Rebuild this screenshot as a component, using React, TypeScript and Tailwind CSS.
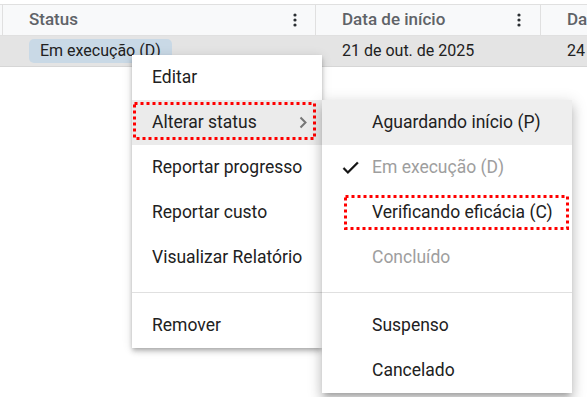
import { ReactNode } from 'react';

function Dots() {
  return (
    <svg width="4" height="14" viewBox="0 0 4 14" className="text-[#2b2f33]">
      <circle cx="2" cy="2" r="1.6" fill="currentColor" />
      <circle cx="2" cy="7" r="1.6" fill="currentColor" />
      <circle cx="2" cy="12" r="1.6" fill="currentColor" />
    </svg>
  );
}

function DottedBox({ w, h }: { w: number; h: number }) {
  return (
    <svg width={w} height={h} className="absolute left-0 top-0 pointer-events-none">
      <rect
        x="1.5"
        y="1.5"
        width={w - 3}
        height={h - 3}
        fill="none"
        stroke="#f00"
        strokeWidth="3"
        strokeDasharray="3 3"
      />
    </svg>
  );
}

function Item({
  children,
  active,
  disabled,
  className = '',
}: {
  children: ReactNode;
  active?: boolean;
  disabled?: boolean;
  className?: string;
}) {
  return (
    <div
      className={`h-[45px] flex items-center text-[17.5px] whitespace-nowrap ${active ? 'bg-[#ebebeb]' : ''} ${
        disabled ? 'text-[#9e9e9e]' : 'text-[#212121]'
      } ${className}`}
    >
      {children}
    </div>
  );
}

export default function App() {
  return (
    <div
      className="relative w-[587px] h-[397px] overflow-hidden bg-white"
      style={{ fontFamily: 'Roboto, "Noto Sans", sans-serif' }}
    >
      {/* Table */}
      <div className="pt-[4px]">
        <div className="flex h-[32px] border-t border-b border-[#e0e0e0] bg-[#f8f9fa] text-[17px] font-medium text-[#5f6368]">
          <div className="w-[3px] border-r border-[#e0e0e0]" />
          <div className="w-[313px] border-r border-[#e0e0e0] flex items-center justify-between pl-[26px] pr-[18px]">
            <span>Status</span>
            <Dots />
          </div>
          <div className="w-[225px] border-r border-[#e0e0e0] flex items-center justify-between pl-[26px] pr-[19px]">
            <span>Data de início</span>
            <Dots />
          </div>
          <div className="flex-1 flex items-center pl-[26px] whitespace-nowrap overflow-hidden">Da</div>
        </div>
        <div className="flex h-[31px] border-b border-[#d6d6d6] bg-[#e4e4e4] text-[16px] text-[#212121]">
          <div className="w-[3px]" />
          <div className="w-[313px] flex items-center pl-[26px]">
            <span className="h-[24px] flex items-center px-[11px] rounded-[5px] bg-[#c9d9e6]">Em execução (D)</span>
          </div>
          <div className="w-[225px] flex items-center pl-[26px]">21 de out. de 2025</div>
          <div className="flex-1 flex items-center pl-[26px] whitespace-nowrap overflow-hidden">24</div>
        </div>
      </div>

      {/* Context menu */}
      <div className="absolute left-[132px] top-[55px] w-[190px] bg-white shadow-[0_2px_4px_-1px_rgba(0,0,0,0.2),0_4px_5px_0_rgba(0,0,0,0.14),0_1px_10px_0_rgba(0,0,0,0.12)]">
        <Item className="pl-[20px]">Editar</Item>
        <div className="relative">
          <Item active className="pl-[20px] pr-[15px] justify-between">
            <span>Alterar status</span>
            <svg width="8" height="13" viewBox="0 0 8 13">
              <path d="M1.5 1.5l5 5-5 5" fill="none" stroke="#757575" strokeWidth="2" />
            </svg>
          </Item>
          <div className="absolute left-[1px] top-[2px] w-[183px] h-[38px]">
            <DottedBox w={183} h={38} />
          </div>
        </div>
        <Item className="pl-[20px]">Reportar progresso</Item>
        <Item className="pl-[20px]">Reportar custo</Item>
        <Item className="pl-[20px]">Visualizar Relatório</Item>
        <div className="mt-[12px] mb-[10px] h-px bg-[#e0e0e0]" />
        <Item className="pl-[20px]">Remover</Item>
      </div>

      {/* Submenu */}
      <div className="absolute left-[322px] top-[100px] w-[250px] bg-white shadow-[0_5px_5px_-3px_rgba(0,0,0,0.2),0_8px_10px_1px_rgba(0,0,0,0.14),0_3px_14px_2px_rgba(0,0,0,0.12)]">
        <Item active className="pl-[50px] bg-[#eeeeee]">Aguardando início (P)</Item>
        <div className="relative">
          <svg width="21" height="21" viewBox="0 0 24 24" className="absolute left-[18px] top-[12px]">
            <path d="M9 16.17L4.83 12l-1.42 1.41L9 19 21 7l-1.41-1.41z" fill="#111" stroke="#111" strokeWidth="0.6" />
          </svg>
          <Item disabled className="pl-[50px]">Em execução (D)</Item>
        </div>
        <div className="relative">
          <Item className="pl-[50px]">Verificando eficácia (C)</Item>
          <div className="absolute left-[22px] top-[5px] w-[225px] h-[35px]">
            <DottedBox w={225} h={35} />
          </div>
        </div>
        <Item disabled className="pl-[50px]">Concluído</Item>
        <div className="mt-[12px] mb-[10px] h-px bg-[#e0e0e0]" />
        <Item className="pl-[50px]">Suspenso</Item>
        <Item className="pl-[50px]">Cancelado</Item>
      </div>
    </div>
  );
}
